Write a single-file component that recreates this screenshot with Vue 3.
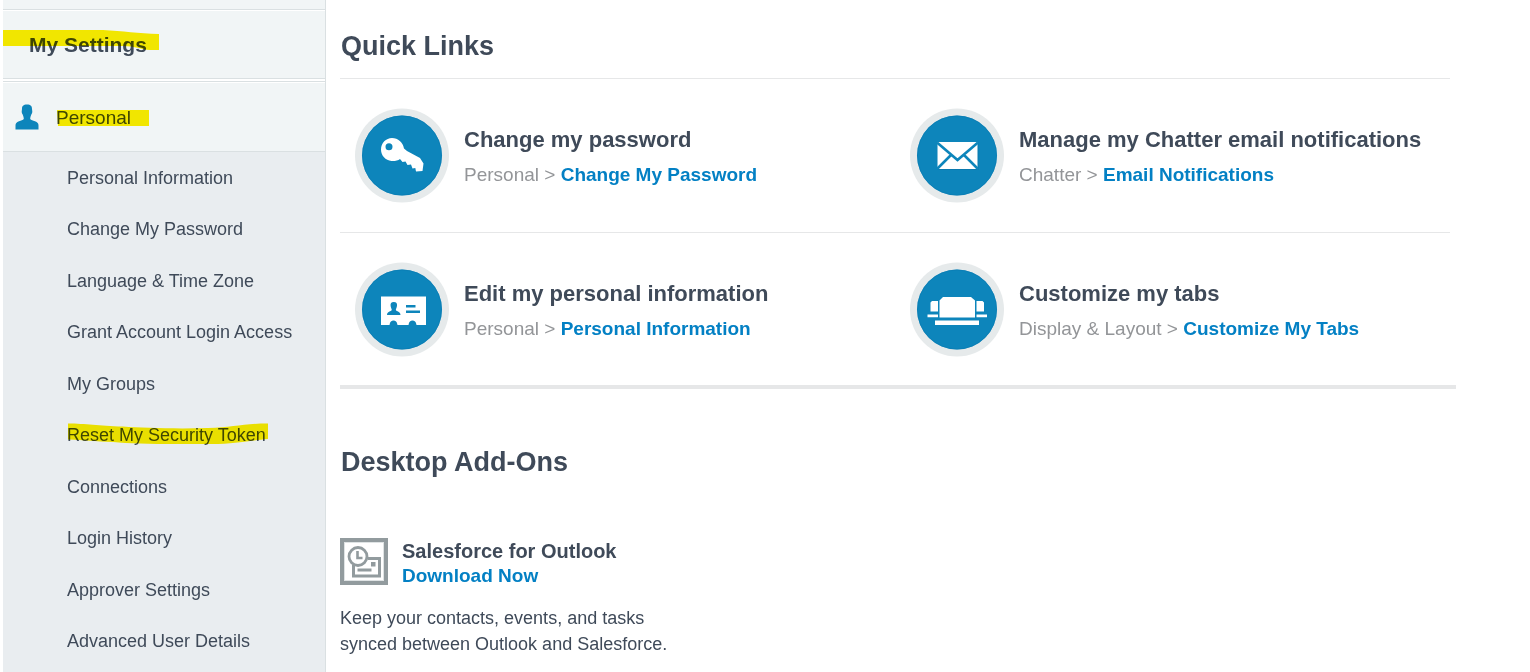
<script setup>
const settings = [
  { label: 'Personal Information' },
  { label: 'Change My Password' },
  { label: 'Language & Time Zone' },
  { label: 'Grant Account Login Access' },
  { label: 'My Groups' },
  { label: 'Reset My Security Token', marked: true },
  { label: 'Connections' },
  { label: 'Login History' },
  { label: 'Approver Settings' },
  { label: 'Advanced User Details' },
]

const quickLinks = [
  { icon: 'key', title: 'Change my password', section: 'Personal', link: 'Change My Password' },
  { icon: 'mail', title: 'Manage my Chatter email notifications', section: 'Chatter', link: 'Email Notifications' },
  { icon: 'card', title: 'Edit my personal information', section: 'Personal', link: 'Personal Information' },
  { icon: 'tabs', title: 'Customize my tabs', section: 'Display & Layout', link: 'Customize My Tabs' },
]
</script>

<template>
  <div class="page">
    <nav class="sidebar" aria-label="My Settings">
      <div class="strip"></div>
      <div class="heading">
        <h1>My Settings</h1>
        <svg class="marker marker-heading" width="156" height="22" viewBox="0 0 156 22" aria-hidden="true">
          <path d="M0 1H100C120 2 135 4.500 156 5V21H147C138 20.500 132 17 120 17H0Z" />
        </svg>
      </div>
      <a class="group" href="#personal">
        <svg class="person" width="24" height="26" viewBox="0 0 24 26" aria-hidden="true">
          <path d="M12 0.500C15.800 0.500 17 2 17 5L17.300 7.500C17.300 9 16.800 9.800 16.300 10.500C15.900 12 15.200 13 15.200 15C16 16.200 18 16.500 20 17.300C22.500 18.300 23.500 19.500 23.500 21.500V25.500H0.500V21.500C0.500 19.500 1.500 18.300 4 17.300C6 16.500 8 16.200 8.800 15C8.800 13 8.100 12 7.700 10.500C7.200 9.800 6.700 9 6.700 7.500L7 5C7 2 8.200 0.500 12 0.500Z" />
        </svg>
        <span class="group-label">
          Personal
          <svg class="marker marker-group" width="92" height="16" viewBox="0 0 92 16" aria-hidden="true">
            <path d="M0 0H92V16H1Z" />
          </svg>
        </span>
      </a>
      <ul class="items">
        <li v-for="item in settings" :key="item.label">
          <a href="#settings">
            {{ item.label }}
            <svg v-if="item.marked" class="marker marker-item" width="200" height="22" viewBox="0 0 200 22" aria-hidden="true">
              <path d="M0 0.500C18 0.500 30 3 55 3.500C75 5 110 6 140 5C165 4.500 175 0.500 200 0.500V16C185 17 175 20 150 21H110C80 21 60 20.500 45 19C25 18.500 18 17 0 16.500Z" />
            </svg>
          </a>
        </li>
      </ul>
    </nav>

    <main class="content">
      <section class="quick">
        <h2>Quick Links</h2>
        <ul class="links">
          <li v-for="item in quickLinks" :key="item.title" class="card">
            <svg class="badge" viewBox="0 0 94 94" aria-hidden="true">
              <circle cx="47" cy="47" r="47" fill="#e6eaeb" />
              <circle cx="47" cy="47" r="40" fill="#0d85bb" />
              <circle cx="47" cy="47" r="39.500" fill="none" stroke="#0a7cb2" stroke-opacity=".6" />
              <g v-if="item.icon === 'key'" fill="#fff">
                <path fill-rule="evenodd" d="M37 29.500C43 29.500 48 34 49 40L52 42.500L65 49.500L68.500 55L67.500 62.500L61 63L60.300 59.500L57.500 60L56 56L52.500 56.500L50.500 53L47.500 53.500L45 50.500C43 52 40 52.700 36.500 52.500C30.500 52 26 47 26 41C26 34.500 31 29.500 37 29.500ZM34 34.700A3.500 3.500 0 1 0 34 41.700A3.500 3.500 0 1 0 34 34.700Z" />
              </g>
              <g v-else-if="item.icon === 'mail'">
                <rect x="27.500" y="34" width="41" height="27.500" fill="#0a70a3" opacity=".5" />
                <rect x="27.500" y="33.500" width="40" height="27" fill="#fff" />
                <path d="M27 34L47.500 51.500L68 34M27 60.500L41.500 46M68 60.500L53.500 46" fill="none" stroke="#0d85bb" stroke-width="2.600" />
              </g>
              <g v-else-if="item.icon === 'card'">
                <path d="M26 34H71V62.500H61.500C61 59 59.500 58 57.500 58S54 59 53.500 62.500H42.500C42 59 40.500 58 38.500 58S35 59 34.500 62.500H26Z" fill="#fff" />
                <path d="M38.800 39.500C41.500 39.500 42.300 41 42 43.200C41.800 45 41 46 40.800 47.500C41.500 49 45.500 49 45.500 52.500H32C32 49 36 49 36.800 47.500C36.600 46 35.800 45 35.600 43.200C35.300 41 36.100 39.500 38.800 39.500Z" fill="#0d85bb" />
                <path d="M51 42.500H60.500V45H51ZM51 48H65V50.500H51Z" fill="#0d85bb" />
              </g>
              <g v-else fill="#fff">
                <path d="M33 34.500H61L65 38V55H29.500V38Z" />
                <path d="M22 38.500H28V49H20.500V40ZM66.500 38.500H72.500L74 40V49H66.500Z" />
                <path d="M17.500 52H28V54.700H17.500ZM66.500 52H77V54.700H66.500ZM25 58H69V62.500H25Z" />
              </g>
            </svg>
            <div class="text">
              <h3>{{ item.title }}</h3>
              <p>{{ item.section }} &gt; <a href="#settings">{{ item.link }}</a></p>
            </div>
          </li>
        </ul>
      </section>

      <section class="addons">
        <h2>Desktop Add-Ons</h2>
        <div class="addon">
          <svg class="outlook" width="48" height="47" viewBox="0 0 48 47" aria-hidden="true">
            <rect width="48" height="47" fill="#929b9e" />
            <rect x="4.500" y="4.500" width="39" height="38" fill="#fff" stroke="#dfe3e4" />
            <path d="M13.500 27V38H39.500V20.500H28" fill="none" stroke="#929b9e" stroke-width="3" />
            <path d="M17.500 30.500H31.500V33.500H17.500ZM31 24H35.500V28.500H31Z" fill="#929b9e" />
            <circle cx="18" cy="18.500" r="9" fill="#fff" stroke="#929b9e" stroke-width="2.800" />
            <path d="M17.500 13V20H22.500" fill="none" stroke="#929b9e" stroke-width="2.600" />
          </svg>
          <div>
            <h3>Salesforce for Outlook</h3>
            <a href="#download">Download Now</a>
          </div>
        </div>
        <p class="about">Keep your contacts, events, and tasks synced between Outlook and Salesforce.</p>
      </section>
    </main>
  </div>
</template>

<style>
body {
  margin: 0;
  background: #fff;
}
</style>

<style scoped>
.page {
  display: flex;
  min-height: 100vh;
  font-family: "Liberation Sans", Arial, sans-serif;
  color: #3f4a59;
}

h1, h2, h3, p, ul {
  margin: 0;
  padding: 0;
}

ul {
  list-style: none;
}

a {
  color: #0380c4;
  font-weight: bold;
  text-decoration: none;
}

.sidebar {
  box-sizing: border-box;
  flex: none;
  width: 323px;
  margin-left: 3px;
  border-right: 1px solid #dae0e2;
  background: #e9edf0;
}

.strip {
  height: 9px;
  border-bottom: 1px solid #dae0e2;
  background: #f1f5f6;
}

.heading {
  position: relative;
  display: flex;
  align-items: center;
  height: 67px;
  padding-left: 26px;
  border-top: 1px solid #fff;
  border-bottom: 1px solid #dae0e2;
  background: #f1f5f6;
}

h1 {
  font-size: 21px;
  line-height: 24px;
}

.group {
  display: flex;
  align-items: center;
  gap: 17px;
  height: 69px;
  margin-top: 2px;
  padding-left: 12px;
  border-top: 1px solid #dae0e2;
  border-bottom: 1px solid #dae0e2;
  background: #f1f5f6;
  box-shadow: inset 0 1px #fff, 0 -2px #fff;
}

.person {
  fill: #0d85bb;
}

.group-label {
  position: relative;
  padding-top: 3px;
  color: #3f4a59;
  font-size: 19px;
  font-weight: normal;
  line-height: 24px;
}

.marker {
  position: absolute;
  fill: #fff000;
  mix-blend-mode: multiply;
  pointer-events: none;
}

.marker-heading {
  top: 18px;
  left: 0;
}

.marker-group {
  top: 7px;
  left: 1px;
}

.marker-item {
  top: -2px;
  left: 1px;
}

.items {
  display: grid;
  grid-auto-rows: 51px 52px;
  align-items: center;
  padding-left: 64px;
}

.items a {
  position: relative;
  color: #3f4a59;
  font-size: 18px;
  font-weight: normal;
  line-height: 24px;
}

.content {
  flex: 1;
  padding: 30px 74px 0 14px;
}

h2 {
  padding-left: 1px;
  font-size: 27px;
  line-height: 32px;
}

.quick {
  border-bottom: 4px solid #e6e7e8;
}

.links {
  display: grid;
  grid-template-columns: 1fr 1fr;
  margin: 16px 6px 0 0;
}

.card {
  display: flex;
  gap: 15px;
  padding: 29px 0 29px 15px;
  border-top: 1px solid #e6e7e8;
}

.card:nth-last-child(-n + 2) {
  padding-bottom: 28px;
}

.badge {
  flex: none;
  width: 94px;
  height: 95px;
}

.text h3 {
  margin-top: 17px;
  font-size: 22px;
  line-height: 30px;
}

.text p {
  margin-top: 8px;
  color: #939598;
  font-size: 19px;
  line-height: 24px;
}

.addons h2 {
  margin-top: 57px;
}

.addon {
  display: flex;
  gap: 14px;
  margin-top: 60px;
}

.addon h3 {
  font-size: 20px;
  line-height: 26px;
}

.addon a {
  display: block;
  font-size: 19px;
  line-height: 24px;
}

.about {
  max-width: 340px;
  margin-top: 17px;
  font-size: 18px;
  line-height: 26px;
}
</style>
